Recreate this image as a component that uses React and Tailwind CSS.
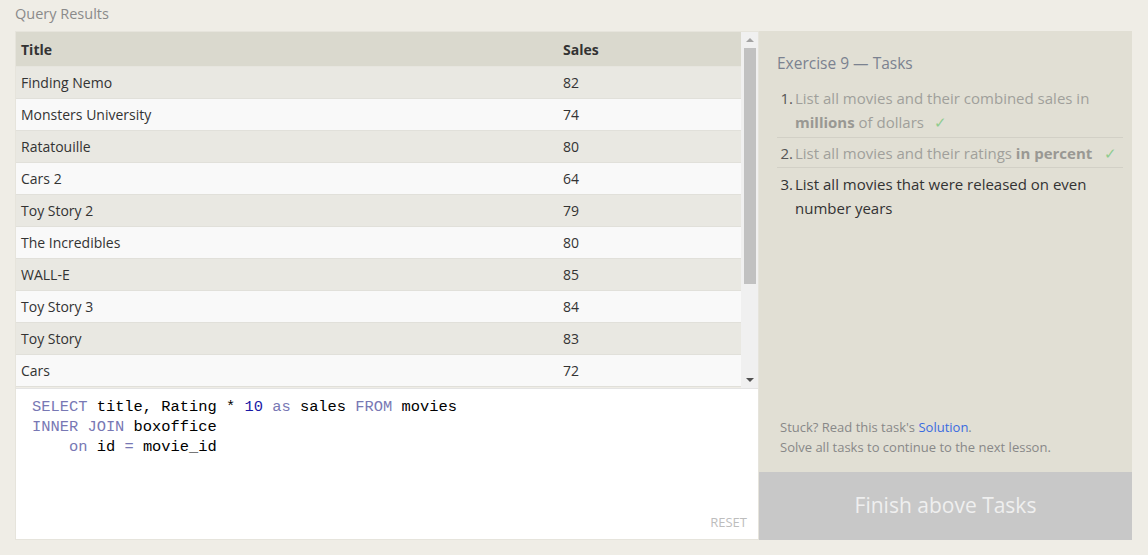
const rows = [
  ["Finding Nemo", 82],
  ["Monsters University", 74],
  ["Ratatouille", 80],
  ["Cars 2", 64],
  ["Toy Story 2", 79],
  ["The Incredibles", 80],
  ["WALL-E", 85],
  ["Toy Story 3", 84],
  ["Toy Story", 83],
  ["Cars", 72],
];

const kw = "text-[#7878b4]";

export default function App() {
  return (
    <div
      className="w-[1148px] h-[555px] bg-[#efede6] text-[#333] overflow-hidden"
      style={{ fontFamily: '"Open Sans", "Noto Sans", sans-serif' }}
    >
      <div className="h-[31px] pl-[15px] pt-[3px] text-[14.5px] text-[#8a8a8a]">
        Query Results
      </div>

      <div className="flex ml-[15px] w-[1117px] h-[509px]">
        {/* LEFT: results + editor */}
        <div className="w-[744px] flex flex-col border border-[#e6e4dc]">
          <div className="flex h-[356px]">
            <div className="flex-1">
              <div className="flex h-[35px] items-center bg-[#dad9ce] font-bold text-[14px] border-b border-[#e6e5de]">
                <div className="w-[542px] pl-[5px]">Title</div>
                <div className="pl-[5px]">Sales</div>
              </div>
              {rows.map(([t, s], i) => (
                <div
                  key={t}
                  className={`flex h-[32px] items-center text-[14px] border-b border-[#e1e0da] ${
                    i % 2 === 0 ? "bg-[#e9e8e2]" : "bg-[#f9f9f9]"
                  }`}
                >
                  <div className="w-[542px] pl-[5px]">{t}</div>
                  <div className="pl-[5px]">{s}</div>
                </div>
              ))}
            </div>
            {/* scrollbar */}
            <div className="w-[17px] bg-[#f0f0f0] flex flex-col items-center">
              <div className="h-[16px] flex items-center justify-center">
                <div className="w-0 h-0 border-l-[4px] border-r-[4px] border-b-[4px] border-l-transparent border-r-transparent border-b-[#a3a3a3]" />
              </div>
              <div className="w-[12px] h-[236px] bg-[#c1c1c1]" />
              <div className="flex-1" />
              <div className="h-[16px] flex items-center justify-center">
                <div className="w-0 h-0 border-l-[4px] border-r-[4px] border-t-[4px] border-l-transparent border-r-transparent border-t-[#505050]" />
              </div>
            </div>
          </div>
          <div className="flex-1 bg-white relative border-t border-[#e4e4e4]">
            <pre
              className="pl-[16px] pt-[8px] text-[15.4px] leading-[20px] text-black"
              style={{ fontFamily: '"Liberation Mono", "DejaVu Sans Mono", monospace' }}
            >
              <span className={kw}>SELECT</span> title, Rating * <span className="text-[#1a1aa6]">10</span>{" "}
              <span className={kw}>as</span> sales <span className={kw}>FROM</span> movies
              {"\n"}
              <span className={kw}>INNER JOIN</span> boxoffice
              {"\n    "}
              <span className={kw}>on</span> id <span className={kw}>=</span> movie_id
            </pre>
            <div className="absolute right-[11px] bottom-[7px] text-[13px] text-[#bdbdbd]">RESET</div>
          </div>
        </div>

        {/* RIGHT: tasks */}
        <div className="w-[373px] flex flex-col bg-[#e1dfd4]">
          <div className="flex-1 pl-[18px] pr-[9px] pt-[21px]">
            <div className="text-[15.5px] text-[#7b8290]">Exercise 9 — Tasks</div>
            <ol className="mt-[11px] text-[15px] leading-[24px]">
              <li className="flex pb-[3px] border-b border-[#d2d0c6] text-[#a09f9b]">
                <span className="w-[18px] shrink-0 text-right pr-[2px] text-[#555]">1.</span>
                <span>
                  List all movies and their combined sales in <b className="text-[#999893]">millions</b> of dollars
                  <span className="ml-[10px] text-[#8fcc8f]">✓</span>
                </span>
              </li>
              <li className="flex pt-[3px] pb-[2px] border-b border-[#d2d0c6] text-[#a09f9b]">
                <span className="w-[18px] shrink-0 text-right pr-[2px] text-[#555]">2.</span>
                <span>
                  List all movies and their ratings <b className="text-[#999893]">in percent</b>
                  <span className="ml-[12px] text-[#8fcc8f]">✓</span>
                </span>
              </li>
              <li className="flex pt-[4px] text-[#333]">
                <span className="w-[18px] shrink-0 text-right pr-[2px]">3.</span>
                <span>List all movies that were released on even number years</span>
              </li>
            </ol>
          </div>
          <div className="pl-[21px] pb-[15px] text-[13px] leading-[20px] text-[#888]">
            <div>
              Stuck? Read this task's <span className="text-[#3a6be0]">Solution</span>.
            </div>
            <div>Solve all tasks to continue to the next lesson.</div>
          </div>
          <div className="h-[68px] bg-[#c8c8c8] flex items-center justify-center text-[21px] text-[#efefef]">
            Finish above Tasks
          </div>
        </div>
      </div>
    </div>
  );
}
